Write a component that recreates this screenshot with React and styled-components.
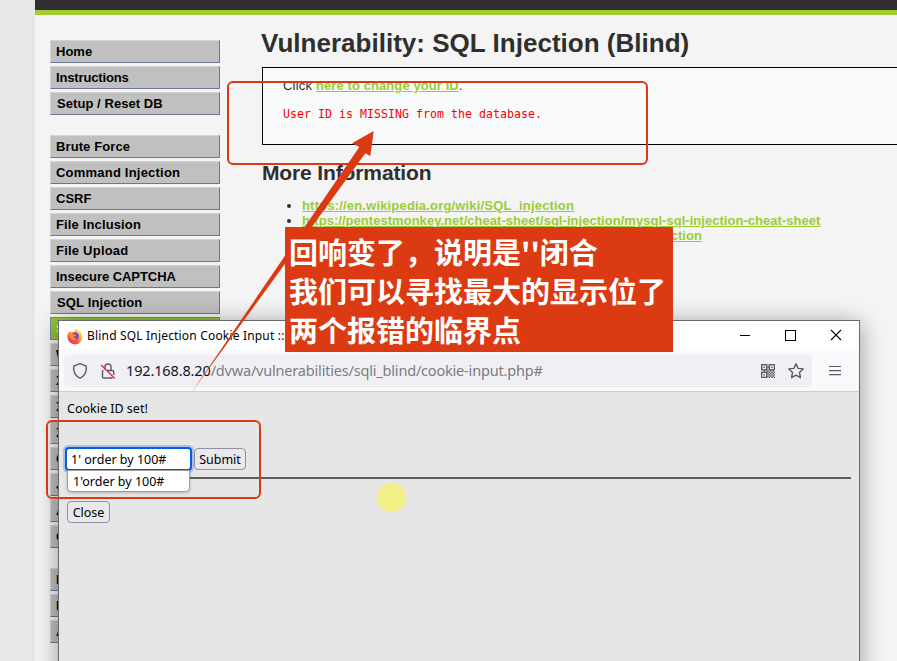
import React from 'react';
import styled, { createGlobalStyle } from 'styled-components';

const Global = createGlobalStyle`
  * { box-sizing: border-box; }
  html, body { margin: 0; padding: 0; overflow: hidden; }
`;
const ui = `'Noto Sans', 'Open Sans', sans-serif`;

const Screen = styled.div`
  position: relative; width: 897px; height: 661px; overflow: hidden;
  background: #e7e7e7; padding-left: 35px;
  font-family: 'Liberation Sans', Arial, sans-serif; color: #2f2f2f;
`;
const Container = styled.div`background: #f4f4f4; height: 661px;`;
const Header = styled.header`height: 15px; background: #2f2f2f; border-bottom: 5px solid #a1cc33;`;
const Columns = styled.div`display: flex; padding-left: 15px;`;
const Sidebar = styled.nav`width: 170px; flex: none; padding-top: 25px;`;
const MenuGroup = styled.ul`
  list-style: none; margin: 0 0 20px; padding: 0;
  display: flex; flex-direction: column; gap: 3px;
`;
const MenuItem = styled.li`
  height: 23px; padding-left: ${p => p.$pad || 5}px; line-height: 21px; white-space: nowrap;
  font-size: 13px; font-weight: bold; letter-spacing: ${p => p.$ls || 0}px;
  background: ${p => (p.$active ? '#93c62f' : '#c0c0c0')};
  color: ${p => (p.$active ? '#e4efca' : '#000')};
  border: 1px solid; border-color: ${p => (p.$active ? '#718ba3' : '#d3d3d3 #6c7893 #6c7893 #d3d3d3')};
`;
const Main = styled.main`flex: 1; padding: 12px 0 0 42px; white-space: nowrap;`;
const Title = styled.h1`margin: 0 0 0 -1px; font-size: 26px; line-height: 32px; letter-spacing: .02px;`;
const ResultBox = styled.section`
  margin-top: 8px; height: 78px; border: 1px solid #000; border-right: 0;
  background: #f8fbfa; padding: 10px 20px; font-size: 13px; line-height: 16px;
`;
const Click = styled.span`letter-spacing: .2px;`;
const Link = styled.a`color: #9acd32; font-weight: bold; text-decoration: underline; letter-spacing: ${p => p.$ls || 0}px;`;
const Missing = styled.pre`
  margin: 12px 0 0; color: #f00; font: 11.6px/16px 'DejaVu Sans Mono', monospace; letter-spacing: .02px;
`;
const SubTitle = styled.h2`margin: 16px 0 0; font-size: 21px; line-height: 24px; letter-spacing: -.13px;`;
const LinkList = styled.ul`margin: 13px 0 0; padding-left: 40px; font-size: 13px; line-height: 15px;`;

const Win = styled.section`
  position: absolute; left: 58px; top: 320px; width: 802px; height: 360px;
  border: 1px solid #69696b; background: #e6e6e6; color: #000;
  box-shadow: 0 3px 22px rgba(0,0,0,.38); font-family: ${ui};
`;
const TitleBar = styled.div`height: 30px; background: #fff; display: flex; align-items: center; padding-left: 8px;`;
const WinTitle = styled.span`
  flex: 1; margin-left: 4px; padding-bottom: 1px; font-size: 12px; line-height: 17px; white-space: nowrap; letter-spacing: .18px;
`;
const WinButtons = styled.div`display: flex; align-items: center; gap: 34px; padding: 0 17px 2px 0;`;
const ToolBar = styled.div`
  height: 41px; background: #f9f9fb; border-bottom: 1px solid #ccccce;
  display: flex; align-items: center; padding: 0 17px 0 5px;
`;
const UrlBar = styled.div`
  width: 748px; height: 32px; border-radius: 4px; background: #f0f0f4;
  display: flex; align-items: center; padding: 0 7px 0 8px; margin-right: 17px;
`;
const Url = styled.span`
  flex: 1; margin-left: 10px; padding-bottom: 2px; font-size: 14.5px; line-height: 20px; color: #7c7c82; letter-spacing: -.19px;
  b { font-weight: 400; color: #15141a; letter-spacing: -.14px; }
`;
const PageBody = styled.div`padding: 8px; font-size: 12.5px;`;
const Note = styled.p`margin: 0; line-height: 18px; letter-spacing: 0;`;
const Form = styled.div`display: flex; align-items: center; gap: 4px; margin-top: 30px; height: 22px;`;
const Field = styled.div`
  position: relative; width: 123px; height: 20px; background: #fff;
  outline: 2px solid #0060df; box-shadow: 0 0 0 4px #a9bfe6; border-radius: 2px;
  padding-left: 4px; line-height: 22px; font-size: 12.5px;
`;
const Suggestion = styled.div`
  position: absolute; left: 0; top: 21px; width: 123px; height: 22px; background: #fff;
  border: 1px solid #9b9ba0; border-radius: 0 0 4px 4px; box-shadow: 0 1px 3px rgba(0,0,0,.2);
  line-height: 22px; padding-left: 5px; z-index: 2;
`;
const Button = styled.button`
  height: 22px; width: ${p => p.$w}px; padding: 1px 0 0; border: 1px solid #8f8f9d; border-radius: 4px;
  background: #e9e9ed; color: #000; font: 12.5px/19px ${ui};
`;
const Rule = styled.div`height: 2px; margin: 7px 0 22px; background: #5c5c5c;`;

const RedFrame = styled.div`
  position: absolute; left: ${p => p.$x}px; top: ${p => p.$y}px; width: ${p => p.$w}px; height: ${p => p.$h}px;
  border: 2px solid #dc3912; border-radius: 6px;
`;
const Arrow = styled.svg`position: absolute; left: 0; top: 0; pointer-events: none;`;
const Callout = styled.div`
  position: absolute; left: 285px; top: 227px; width: 388px; height: 125px; background: #db3a12; color: #fff;
  font: bold 29px/39px 'Noto Sans CJK SC', sans-serif; padding: 5px 0 0 4px; white-space: nowrap;
`;
const Spot = styled.div`
  position: absolute; left: 377px; top: 483px; width: 29px; height: 29px; border-radius: 50%; background: #f0f087;
`;

const Firefox = () => (
  <svg width="16" height="17" viewBox="0 0 17 17" preserveAspectRatio="none">
    <defs>
      <linearGradient id="flame" x1=".85" y1=".05" x2=".2" y2=".95">
        <stop offset="0" stopColor="#fff044" /><stop offset=".35" stopColor="#ffb52a" />
        <stop offset=".65" stopColor="#ff6037" /><stop offset="1" stopColor="#f4205f" />
      </linearGradient>
    </defs>
    <path d="M3 3.2 4.4 4.6C5.3 4 6.4 4 7.4 4.3 7.9 2.6 9 1 10.4.4c.1 1.5 1.2 2.2 2.3 3.2l.9-.9c.4 1.2 2.6 3 2.7 6.2A8 8 0 0 1 .4 9.600C.2 7.300 1 4.800 3 3.200Z" fill="url(#flame)" />
    <circle cx="8.300" cy="8.700" r="4.100" fill="#7542e5" />
    <path d="M1.300 6.500C3 4.700 5.600 4.500 7.400 6.500L10 7.300C9.500 8.500 8 8.300 7.200 9c.3 1.700 2.400 2 3.700 1.200C10 13 5.500 13.500 3.800 10Z" fill="#ff8b22" />
    <path d="M8 4.300c2.600-.4 4.700 1.500 4.500 4.300-.6-1.900-2-3-4.500-4.300Z" fill="#a735d1" />
  </svg>
);
const Shield = () => (
  <svg width="16" height="18" viewBox="0 0 16 18" fill="none" stroke="#5b5b66" strokeWidth="1.400" strokeLinejoin="round">
    <path d="M8 1.600 14.300 4.100C14.900 9.800 12.800 13.800 8 16.200 3.200 13.800 1.100 9.800 1.700 4.100Z" />
  </svg>
);
const LockOff = () => (
  <svg width="16" height="18" viewBox="0 0 16 18" fill="none" strokeWidth="1.400">
    <path d="M5 7.500V5a3 3 0 0 1 6 0v3M7 8.500h5.500q1.200 0 1.200 1.200V13M12.500 16H3.700q-1.200 0-1.200-1.200V9.700q0-1 1-1.200" stroke="#5b5b66" />
    <path d="M1.200 3 14.800 16.500" stroke="#e22850" />
  </svg>
);
const QR_ROWS = [
  '11111011111', '10001010001', '10101110101', '10001010001', '11111011111', '00101101010',
  '11111010101', '10001101010', '10101010101', '10001101010', '11111010101',
];
const Qr = () => (
  <svg width="14" height="14" viewBox="0 0 11 11" fill="#4c4c57">
    {QR_ROWS.flatMap((r, y) => [...r].map((c, x) => (c === '1' ? <rect key={`${x}-${y}`} x={x} y={y} width="1.080" height="1.080" /> : null)))}
  </svg>
);
const Star = () => (
  <svg width="18" height="18" viewBox="0 0 18 18" fill="none" stroke="#5b5b66" strokeWidth="1.400" strokeLinejoin="round">
    <path d="m9 1.700 2.100 4.700 5.100.5-3.800 3.500 1.100 5.300L9 13.100l-4.500 2.600 1.100-5.300L1.800 6.900l5.100-.5Z" />
  </svg>
);
const Burger = () => (
  <svg width="12" height="12" viewBox="0 0 12 12" stroke="#5b5b66" strokeWidth="1.200">
    <path d="M0 1.500h12M0 5.600h12M0 9.700h12" />
  </svg>
);
const Gap = styled.span`width: ${p => p.$w}px; flex: none;`;

const MENU = [
  [{ name: 'Home' }, { name: 'Instructions', ls: -0.15 }, { name: 'Setup / Reset DB', ls: 0.06, pad: 6 }],
  [
    { name: 'Brute Force', ls: 0.1 }, { name: 'Command Injection', ls: 0.21 }, { name: 'CSRF' },
    { name: 'File Inclusion', ls: 0.14 }, { name: 'File Upload', ls: 0.22 }, { name: 'Insecure CAPTCHA', ls: -0.05 },
    { name: 'SQL Injection', ls: 0.14, pad: 6 }, { name: 'SQL Injection (Blind)', active: true },
    { name: 'Weak Session IDs' }, { name: 'XSS (DOM)' }, { name: 'XSS (Reflected)' }, { name: 'XSS (Stored)' },
    { name: 'CSP Bypass' }, { name: 'JavaScript' }, { name: 'Authorisation Bypass' }, { name: 'Open HTTP Redirect' },
  ],
  [{ name: 'DVWA Security' }, { name: 'PHP Info' }, { name: 'About' }],
];

export default function App() {
  return (
    <Screen>
      <Global />
      <Container>
        <Header />
        <Columns>
          <Sidebar>
            {MENU.map((group, i) => (
              <MenuGroup key={i}>
                {group.map(m => <MenuItem key={m.name} $active={m.active} $ls={m.ls} $pad={m.pad}>{m.name}</MenuItem>)}
              </MenuGroup>
            ))}
          </Sidebar>
          <Main>
            <Title>Vulnerability: SQL Injection (Blind)</Title>
            <ResultBox>
              <Click>Click </Click><Link $ls={0.09}>here to change your ID</Link>.
              <Missing>User ID is MISSING from the database.</Missing>
            </ResultBox>
            <SubTitle>More Information</SubTitle>
            <LinkList>
              <li><Link $ls={0.18}>https://en.wikipedia.org/wiki/SQL_injection</Link></li>
              <li><Link $ls={0.035}>https://pentestmonkey.net/cheat-sheet/sql-injection/mysql-sql-injection-cheat-sheet</Link></li>
              <li><Link $ls={0.085}>https://owasp.org/www-community/attacks/Blind_SQL_Injection</Link></li>
            </LinkList>
          </Main>
        </Columns>
      </Container>

      <Win>
        <TitleBar>
          <Firefox />
          <WinTitle>Blind SQL Injection Cookie Input ::</WinTitle>
          <WinButtons>
            <svg width="12" height="12" stroke="#000" shapeRendering="crispEdges"><path d="M1 6.500h10" /></svg>
            <svg width="11" height="11" fill="none" stroke="#000" shapeRendering="crispEdges"><rect x=".5" y=".5" width="10" height="10" /></svg>
            <svg width="12" height="12" stroke="#000" strokeWidth="1.100"><path d="m1 1 10 10M11 1 1 11" /></svg>
          </WinButtons>
        </TitleBar>
        <ToolBar>
          <UrlBar>
            <Shield /><Gap $w={12} /><LockOff />
            <Url><b>192.168.8.20</b>/dvwa/vulnerabilities/sqli_blind/cookie-input.php#</Url>
            <Qr /><Gap $w={12} /><Star />
          </UrlBar>
          <Burger />
        </ToolBar>
        <PageBody>
          <Note>Cookie ID set!</Note>
          <Form>
            <Field>1' order by 100#<Suggestion>1'order by 100#</Suggestion></Field>
            <Button $w={52}>Submit</Button>
          </Form>
          <Rule />
          <Button $w={43}>Close</Button>
        </PageBody>
      </Win>

      <Spot />
      <RedFrame $x={227} $y={81} $w={421} $h={84} />
      <RedFrame $x={46} $y={420} $w={215} $h={79} />
      <Arrow width="897" height="661">
        <path d="M373.700 131 352 143.300 359.300 147 191.500 392.500 365.300 153.300 370.300 156Z" fill="#db3a12" />
      </Arrow>
      <Callout>
        <div>回响变了，说明是''闭合</div>
        <div>我们可以寻找最大的显示位了</div>
        <div>两个报错的临界点</div>
      </Callout>
    </Screen>
  );
}
